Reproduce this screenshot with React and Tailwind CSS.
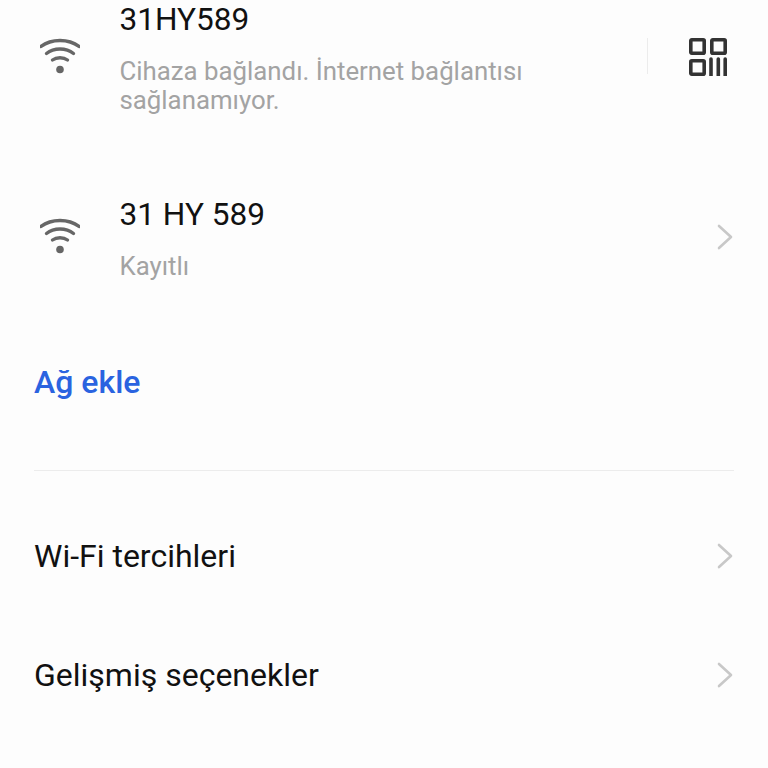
const Wifi = () => (
  <svg width="40" height="40" viewBox="0 0 40 40" fill="none" stroke="#666666" strokeWidth="3.4" strokeLinecap="round">
    <path d="M1 9.5C11.5 1.5 28.5 1.5 39 9.5" />
    <path d="M6.5 16.5C14 10.5 26 10.5 33.5 16.5" />
    <path d="M12.5 23C16.5 20 23.5 20 27.5 23" />
    <circle cx="20" cy="32.5" r="3.8" fill="#666666" stroke="none" />
  </svg>
);
const Chevron = () => (
  <svg width="16" height="26" viewBox="0 0 16 26" fill="none" stroke="#c8c8c8" strokeWidth="2.6" strokeLinecap="round" strokeLinejoin="round">
    <path d="M2 2L14 13L2 24" />
  </svg>
);
const Qr = () => (
  <svg width="38" height="38" viewBox="0 0 38 38" fill="none" stroke="#333333" strokeWidth="3.6" strokeLinejoin="round">
    <rect x="1.8" y="1.8" width="13.4" height="13.4" rx="1" />
    <rect x="22.8" y="1.8" width="13.4" height="13.4" rx="1" />
    <rect x="1.8" y="22.8" width="13.4" height="13.4" rx="1" />
    <path d="M22 21v17M29.3 21v17M36.2 21v17" strokeLinecap="round" />
  </svg>
);

export default function App() {
  return (
    <div className="w-[768px] h-[768px] overflow-hidden bg-[#fdfdfd] font-['Roboto',sans-serif]">
      <div className="h-[136px] flex pl-[40px] pr-[41px]">
        <div className="w-[79.5px] pt-[37px]"><Wifi /></div>
        <div className="w-[430px]">
          <div className="text-[31.6px] leading-[40px] text-[#111111]">31HY589</div>
          <div className="mt-[17px] text-[25.8px] leading-[29px] text-[#a3a3a3]">Cihaza bağlandı. İnternet bağlantısı sağlanamıyor.</div>
        </div>
        <div className="ml-auto flex items-start pt-[38px] gap-[41px]">
          <div className="w-px h-[36px] bg-[#ececec]" />
          <Qr />
        </div>
      </div>
      <div className="h-[159px] flex items-start pl-[40px] pr-[35px] pt-[59px]">
        <div className="w-[79.5px] pt-[22px]"><Wifi /></div>
        <div>
          <div className="text-[31.6px] leading-[40px] text-[#111111]">31 HY 589</div>
          <div className="mt-[16px] text-[25.8px] leading-[30px] text-[#a3a3a3]">Kayıtlı</div>
        </div>
        <div className="ml-auto pt-[29px]"><Chevron /></div>
      </div>
      <div className="mx-[34px] h-[176px] border-b border-[#ececec] pt-[67px] text-[32px] leading-[40px] font-medium text-[#2a63e0]">Ağ ekle</div>
      <div className="flex items-center justify-between h-[119px] pl-[34px] pr-[35px] mt-[25px] text-[32px] text-[#111111]">
        <span>Wi-Fi tercihleri</span>
        <Chevron />
      </div>
      <div className="flex items-center justify-between h-[119px] pl-[34px] pr-[35px] text-[32px] text-[#111111]">
        <span>Gelişmiş seçenekler</span>
        <Chevron />
      </div>
    </div>
  );
}
